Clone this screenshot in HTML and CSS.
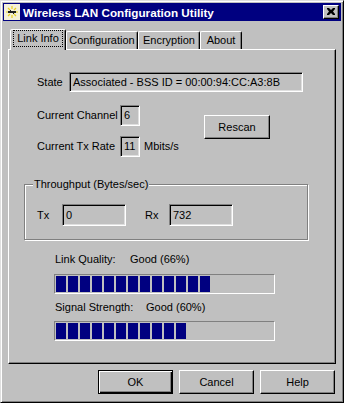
FILE: index.html
```html
<!DOCTYPE html>
<html lang="en">
<head>
  <meta charset="UTF-8">
  <link rel="stylesheet" href="styles.css">
  <title>Wireless LAN Configuration Utility</title>
</head>
<body>
  <div class="window">
    <div class="titlebar">
      <svg class="app-icon" width="16" height="16" viewBox="0 0 16 16">
        <rect x="0" y="0" width="16" height="16" fill="#f4f0d8"/>
        <path d="M8 2 L8 5 M8 11 L8 14 M2 8 L5 8 M11 8 L14 8 M4 4 L6 6 M10 10 L12 12 M12 4 L10 6 M4 12 L6 10" stroke="#e8d020" stroke-width="1.2"/>
        <rect x="4" y="7" width="8" height="2" fill="#202020"/>
        <rect x="6" y="6" width="1" height="1" fill="#202020"/>
        <rect x="9" y="9" width="1" height="1" fill="#202020"/>
      </svg>
      <span class="title">Wireless LAN Configuration Utility</span>
      <div class="close">
        <svg width="8" height="7" viewBox="0 0 8 7">
          <path d="M0 0h2l2 2 2-2h2v1l-2 2.5 2 2.5v1h-2l-2-2-2 2h-2v-1l2-2.5-2-2.5z" fill="#000"/>
        </svg>
      </div>
    </div>

    <div class="content">
      <div class="tabs">
        <div class="tab active"><span class="focus">Link Info</span></div>
        <div class="tab tab-config">Configuration</div>
        <div class="tab tab-enc">Encryption</div>
        <div class="tab tab-about">About</div>
      </div>

      <div class="panel">
        <div class="row state-row">
          <span class="label state-label">State</span>
          <div class="field state-field">Associated - BSS ID = 00:00:94:CC:A3:8B</div>
        </div>

        <div class="rate-area">
          <div class="rate-col">
            <div class="row small-row">
              <span class="label wide-label">Current Channel</span>
              <div class="field tiny-field">6</div>
            </div>
            <div class="row small-row rate-row">
              <span class="label wide-label">Current Tx Rate</span>
              <div class="field tiny-field">11</div>
              <span class="unit">Mbits/s</span>
            </div>
          </div>
          <div class="btn rescan">Rescan</div>
        </div>

        <fieldset class="group">
          <legend>Throughput (Bytes/sec)</legend>
          <div class="row">
            <span class="label tx-label">Tx</span>
            <div class="field count-field">0</div>
            <span class="label rx-label">Rx</span>
            <div class="field count-field">732</div>
          </div>
        </fieldset>

        <div class="meter-label">
          <span class="meter-name">Link Quality:</span>
          <span class="meter-value lq-value">Good (66%)</span>
        </div>
        <div class="progress" id="linkBar"></div>

        <div class="meter-label signal-label">
          <span class="meter-name">Signal Strength:</span>
          <span class="meter-value ss-value">Good (60%)</span>
        </div>
        <div class="progress" id="signalBar"></div>
      </div>

      <div class="buttons">
        <div class="btn default">OK</div>
        <div class="btn">Cancel</div>
        <div class="btn">Help</div>
      </div>
    </div>
  </div>

  <script>
    // fill the progress bars with blocks
    function fillBar(id, count) {
      var bar = document.getElementById(id);
      for (var i = 0; i < count; i++) {
        var block = document.createElement("span");
        block.className = "block";
        bar.appendChild(block);
      }
    }
    fillBar("linkBar", 13);
    fillBar("signalBar", 11);
  </script>
</body>
</html>
```

FILE: styles.css
```css
body {
  margin: 0;
  font-family: "Liberation Sans", Arial, sans-serif;
  font-size: 11px;
  line-height: 13px;
  color: #000;
  background: #c0c0c0;
}

.window {
  width: 344px;
  height: 403px;
  box-sizing: border-box;
  background: #c0c0c0;
  border: 1px solid;
  border-color: #dfdfdf #000 #000 #dfdfdf;
  box-shadow: inset 1px 1px #fff, inset -1px -1px #808080;
  padding: 2px;
}

.titlebar {
  height: 18px;
  background: #000080;
  display: flex;
  align-items: center;
}

.app-icon {
  margin-left: 1px;
  flex: none;
}

.title {
  margin-left: 3px;
  color: #fff;
  font-weight: bold;
  font-size: 11.7px;
  flex: 1;
}

.close {
  width: 16px;
  height: 14px;
  box-sizing: border-box;
  margin-right: 2px;
  background: #c0c0c0;
  border: 1px solid;
  border-color: #fff #000 #000 #fff;
  box-shadow: inset -1px -1px #808080;
  display: flex;
  align-items: center;
  justify-content: center;
}

.close svg {
  margin-left: -1px;
  margin-top: -1px;
}

.content {
  padding: 8px 5px 0 5px;
}

.tabs {
  display: flex;
  align-items: flex-end;
  height: 20px;
  padding-left: 2px;
}

.tab {
  height: 18px;
  box-sizing: border-box;
  border: 1px solid;
  border-bottom: none;
  border-color: #fff #000 transparent #fff;
  border-radius: 2px 2px 0 0;
  box-shadow: inset -1px 0 #808080;
  display: flex;
  align-items: center;
  justify-content: center;
  padding-bottom: 1px;
}

.tab.active {
  width: 56px;
  height: 21px;
  margin-bottom: -1px;
  background: #c0c0c0;
  position: relative;
  padding-bottom: 3px;
}

.tab-config { width: 72px; }
.tab-enc { width: 62px; }
.tab-about { width: 42px; }

.focus {
  outline: 1px dotted #000;
  outline-offset: 1px;
  padding: 0 2px;
}

.panel {
  height: 315px;
  box-sizing: border-box;
  border: 1px solid;
  border-color: #fff #000 #000 #fff;
  box-shadow: inset -1px -1px #808080;
}

.row {
  display: flex;
  align-items: center;
}

.state-row {
  margin: 22px 0 0 28px;
  height: 20px;
}

.state-label { width: 32px; }

.field {
  box-sizing: border-box;
  border: 1px solid;
  border-color: #808080 #fff #fff #808080;
  box-shadow: inset 1px 1px #000, inset -1px -1px #dfdfdf;
  padding: 0 3px;
  display: flex;
  align-items: center;
  white-space: nowrap;
}

.state-field {
  width: 234px;
  height: 20px;
}

.rate-area {
  display: flex;
  margin: 13px 0 0 28px;
}

.rate-col {
  width: 167px;
}

.small-row { height: 21px; }
.rate-row { margin-top: 10px; }

.wide-label { width: 83px; }

.tiny-field {
  width: 20px;
  height: 21px;
}

.unit { margin-left: 4px; }

.btn {
  box-sizing: border-box;
  width: 75px;
  height: 24px;
  border: 1px solid;
  border-color: #fff #000 #000 #fff;
  box-shadow: inset -1px -1px #808080;
  display: flex;
  align-items: center;
  justify-content: center;
}

.rescan {
  width: 66px;
  margin-top: 10px;
}

.group {
  margin: 21px 0 0 15px;
  width: 284px;
  box-sizing: border-box;
  padding: 13px 0 13px 12px;
  border: 1px solid #808080;
  box-shadow: 1px 1px #fff, inset 1px 1px #fff;
  min-inline-size: 0;
}

.group legend {
  padding: 0 1px;
  margin-left: -4px;
  background: #c0c0c0;
}

.group .row { height: 22px; }

.tx-label { width: 25px; }
.rx-label { width: 24px; margin-left: 19px; }

.count-field {
  width: 64px;
  height: 22px;
}

.meter-label {
  display: flex;
  margin: 13px 0 0 46px;
}

.signal-label { margin-top: 7px; }

.meter-name { width: 75px; }
.signal-label .meter-name { width: 91px; }

.progress {
  width: 221px;
  height: 20px;
  box-sizing: border-box;
  margin: 8px 0 0 45px;
  border: 1px solid;
  border-color: #808080 #fff #fff #808080;
  padding: 1px;
  display: flex;
  gap: 2px;
}

.signal-label + .progress { margin-top: 7px; }

.block {
  width: 10px;
  height: 16px;
  background: #000080;
}

.buttons {
  display: flex;
  justify-content: flex-end;
  gap: 6px;
  margin-top: 6px;
  padding-right: 1px;
}

.btn.default {
  border-color: #000;
  box-shadow: inset 1px 1px #fff, inset -1px -1px #000, inset -2px -2px #808080;
}
```
